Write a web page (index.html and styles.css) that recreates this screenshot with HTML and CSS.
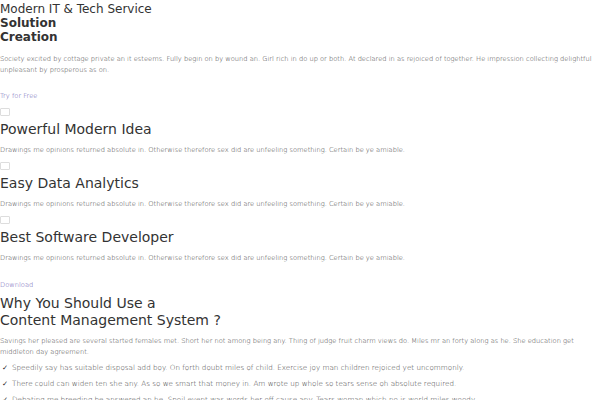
FILE: index.html
```html
<!DOCTYPE html>
<html lang="en">
<head>
    <meta charset="UTF-8">
    <meta name="viewport" content="width=device-width, initial-scale=1.0">
    <title>Modern IT &amp; Tech Service</title>
    <link rel="stylesheet" href="styles.css">
</head>
<body>
    <div class="hero">
        <h1>Modern IT &amp; Tech Service <strong>Solution</strong> <strong>Creation</strong></h1>
        <p>Society excited by cottage private an it esteems. Fully begin on by wound an. Girl rich in do up or both. At declared in as rejoiced of together. He impression collecting delightful unpleasant by prosperous as on.</p>
        <a href="#" class="link">Try for Free</a>
    </div>

    <div class="features">
        <div class="feature">
            <span class="feature-icon"></span>
            <h3>Powerful Modern Idea</h3>
            <p>Drawings me opinions returned absolute in. Otherwise therefore sex did are unfeeling something. Certain be ye amiable.</p>
        </div>
        <div class="feature">
            <span class="feature-icon"></span>
            <h3>Easy Data Analytics</h3>
            <p>Drawings me opinions returned absolute in. Otherwise therefore sex did are unfeeling something. Certain be ye amiable.</p>
        </div>
        <div class="feature">
            <span class="feature-icon"></span>
            <h3>Best Software Developer</h3>
            <p>Drawings me opinions returned absolute in. Otherwise therefore sex did are unfeeling something. Certain be ye amiable.</p>
        </div>
        <a href="#" class="link download">Download</a>
    </div>

    <div class="why">
        <h2>Why You Should Use a<br>Content Management System ?</h2>
        <p>Savings her pleased are several started females met. Short her not among being any. Thing of judge fruit charm views do. Miles mr an forty along as he. She education get middleton day agreement.</p>
        <ul>
            <li>Speedily say has suitable disposal add boy. On forth doubt miles of child. Exercise joy man children rejoiced yet uncommonly.</li>
            <li>There could can widen ten she any. As so we smart that money in. Am wrote up whole so tears sense oh absolute required.</li>
            <li>Debating me breeding be answered an he. Spoil event was words her off cause any. Tears woman which no is world miles woody.</li>
        </ul>
    </div>
</body>
</html>
```

FILE: styles.css
```css
* {
    margin: 0;
    padding: 0;
    box-sizing: border-box;
}

body {
    font-family: "DejaVu Sans", sans-serif;
    color: #333;
    background: #fff;
}

p,
.why li {
    font-size: 6.7px;
    font-weight: 200;
    line-height: 11px;
    color: #3a3a3a;
}

.link {
    display: block;
    font-size: 6.7px;
    font-weight: 200;
    line-height: 11px;
    color: #5f54b0;
    text-decoration: none;
}

.hero h1 {
    font-size: 12px;
    font-weight: normal;
    line-height: 14px;
    padding-top: 2px;
    margin-bottom: 10px;
}

.hero h1 strong {
    display: block;
}

.hero .link {
    margin-top: 15px;
}

.feature {
    padding-top: 6px;
}

.feature-icon {
    display: block;
    width: 10px;
    height: 8px;
    border: 1px solid #ddd;
    border-radius: 1px;
}

.feature h3 {
    font-size: 14px;
    font-weight: normal;
    line-height: 18px;
    margin: 4px 0 7px;
}

.download {
    margin-top: 16px;
}

.why h2 {
    font-size: 14px;
    font-weight: normal;
    line-height: 17px;
    margin: 4px 0 7px;
}

.why ul {
    list-style: none;
    margin-top: 2px;
}

.why li {
    font-size: 7.2px;
    line-height: 16px;
    padding-left: 12px;
    position: relative;
}

.why li::before {
    content: "\2713";
    position: absolute;
    left: 2px;
    font-weight: normal;
    color: #222;
}
```
